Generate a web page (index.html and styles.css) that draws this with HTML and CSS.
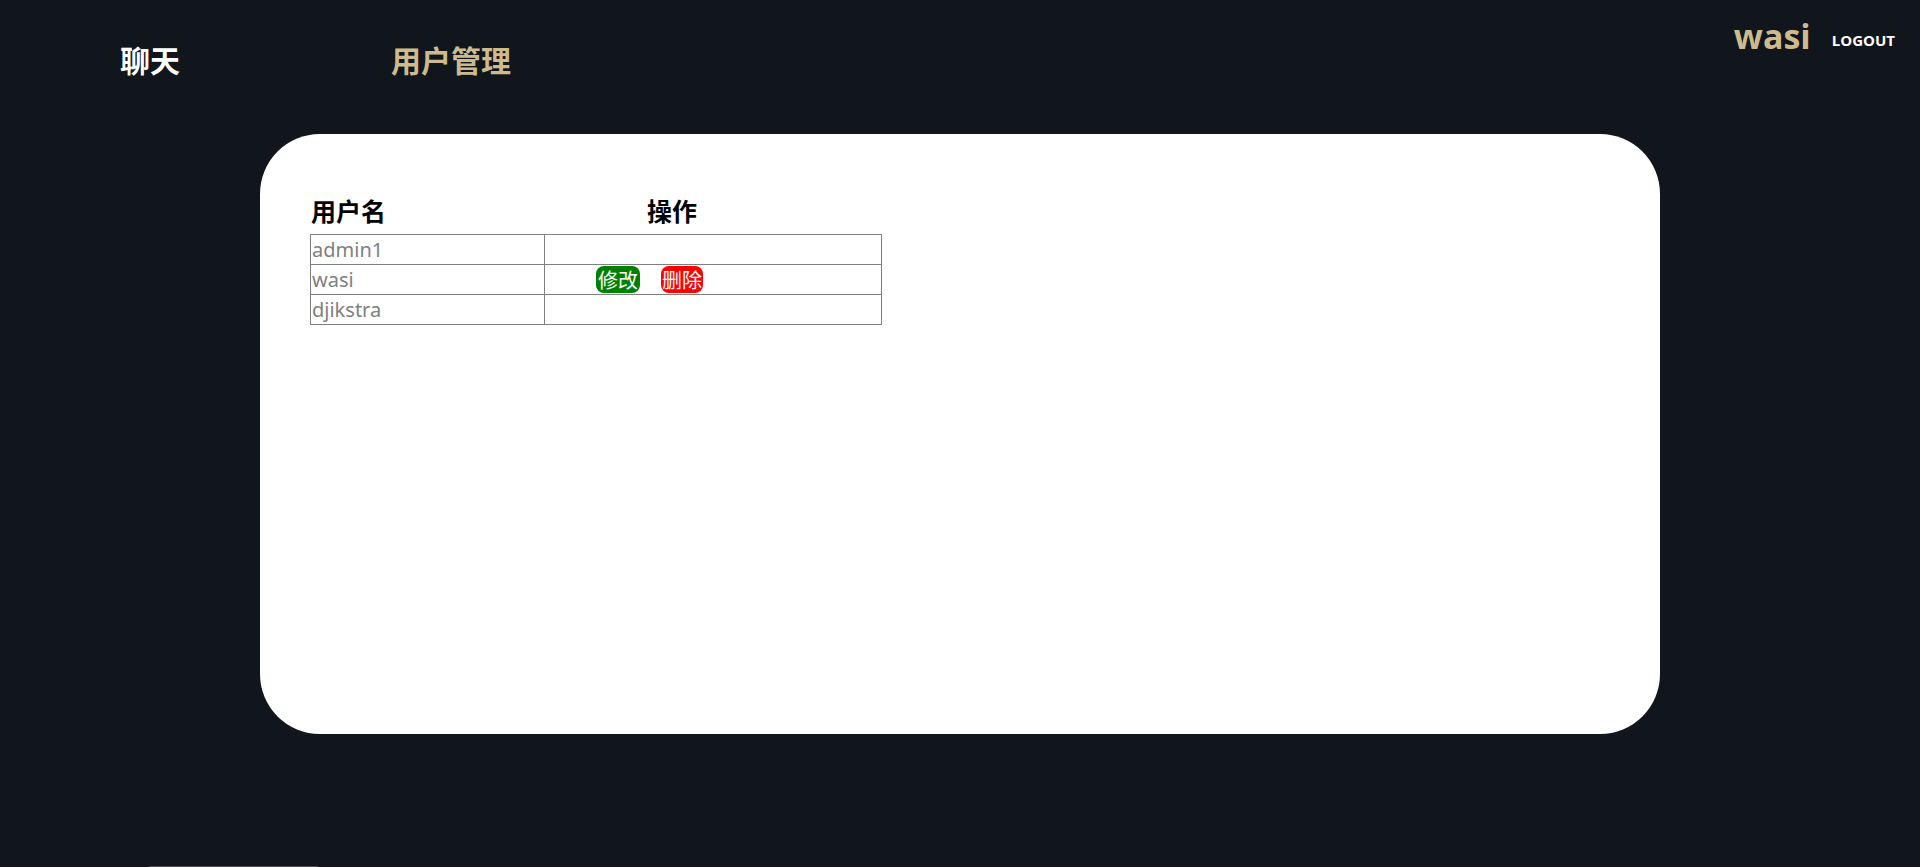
FILE: index.html
```html
<!DOCTYPE html>
<html lang="zh-CN">
<head>
<meta charset="utf-8">
<title>用户管理</title>
<link rel="stylesheet" href="styles.css">
</head>
<body>
<header class="topbar">
  <nav class="nav">
    <a class="nav-item nav-chat">聊天</a>
    <a class="nav-item nav-users">用户管理</a>
  </nav>
  <div class="user">
    <span class="username">wasi</span>
    <a class="logout">LOGOUT</a>
  </div>
</header>
<main class="card">
  <div class="table-head">
    <span class="th-name">用户名</span>
    <span class="th-ops">操作</span>
  </div>
  <table class="users">
    <tbody>
      <tr><td class="col-name">admin1</td><td class="col-ops"></td></tr>
      <tr><td class="col-name">wasi</td><td class="col-ops"><button class="btn btn-edit">修改</button><button class="btn btn-delete">删除</button></td></tr>
      <tr><td class="col-name">djikstra</td><td class="col-ops"></td></tr>
    </tbody>
  </table>
</main>
<div class="scroll-thumb"></div>
</body>
</html>
```
FILE: styles.css
```css
html, body {
  margin: 0;
  padding: 0;
}
body {
  background: #11151c;
  font-family: "Noto Sans", "Noto Sans CJK SC", sans-serif;
  height: 867px;
  overflow: hidden;
}
.topbar {
  display: flex;
  justify-content: space-between;
  align-items: flex-start;
  height: 110px;
}
.nav {
  display: flex;
  padding-top: 44px;
  padding-left: 120px;
}
.nav-item {
  font-family: "Noto Sans CJK SC", sans-serif;
  font-size: 30px;
  font-weight: 700;
  line-height: 1;
  text-decoration: none;
  cursor: pointer;
}
.nav-chat {
  color: #ffffff;
  width: 271px;
}
.nav-users {
  color: #cdbb8e;
}
.user {
  display: flex;
  align-items: flex-start;
  padding-top: 19px;
  padding-right: 25px;
}
.username {
  font-family: "Open Sans", sans-serif;
  font-size: 34px;
  font-weight: 700;
  line-height: 1;
  color: #cdbb8e;
}
.logout {
  font-family: "Open Sans", sans-serif;
  font-size: 15px;
  font-weight: 700;
  line-height: 1;
  color: #ffffff;
  margin-top: 14px;
  margin-left: 21px;
  cursor: pointer;
}
.card {
  box-sizing: border-box;
  width: 1400px;
  height: 600px;
  margin: 24px auto 0;
  background: #ffffff;
  border-radius: 60px;
  padding: 64px 50px 0;
}
.table-head {
  display: flex;
  font-family: "Noto Sans CJK SC", sans-serif;
  font-size: 25px;
  font-weight: 700;
  line-height: 1;
  color: #000000;
  height: 36px;
}
.th-name {
  width: 336px;
  padding-left: 1px;
}
.users {
  border-collapse: collapse;
  width: 572px;
  font-size: 20px;
  color: #808080;
}
.users td {
  border: 1px solid #808080;
  height: 29px;
  line-height: 29px;
  padding: 0 0 0 1px;
  white-space: nowrap;
}
.users .col-name {
  width: 232px;
}
.users .col-ops {
  padding-left: 51px;
}
.btn {
  font-family: "Noto Sans CJK SC", sans-serif;
  font-size: 20px;
  line-height: 27px;
  height: 27px;
  margin-top: 1px;
  padding: 0 2px;
  border: none;
  border-radius: 8px;
  color: #ffffff;
  vertical-align: top;
  cursor: pointer;
}
.btn-edit {
  background: #008000;
  margin-right: 21px;
}
.btn-delete {
  background: #ff0000;
  padding: 0 1px;
}
.scroll-thumb {
  position: fixed;
  left: 149px;
  bottom: 0;
  width: 169px;
  height: 1px;
  background: #4b4e52;
}
```
